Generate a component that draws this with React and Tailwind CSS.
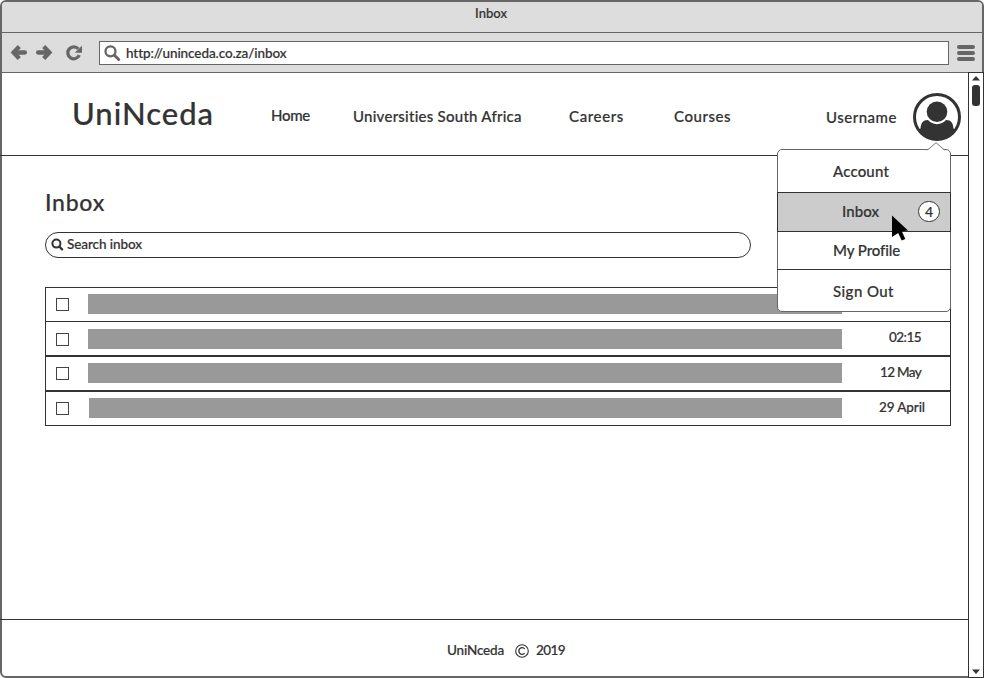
import { useLayoutEffect, useRef, useState } from "react";

// Text run that spreads its letters so that it fills a given width.
function Fit({ width, className = "", children }) {
  const ref = useRef(null);
  const [spacing, setSpacing] = useState(0);
  useLayoutEffect(() => {
    const natural = ref.current.getBoundingClientRect().width;
    setSpacing((width - natural) / String(children).length);
  }, [width, children]);
  return (
    <span
      ref={ref}
      className={"block w-max shrink-0 whitespace-pre " + className}
      style={{ letterSpacing: spacing }}
    >
      {children}
    </span>
  );
}

function TitleBar() {
  return (
    <div className="flex h-[31px] justify-center rounded-t-[4px] border-b border-[#666] bg-[#ddd] pt-[2px]">
      <Fit width={32} className="-mt-px mr-[2px] text-[13px] leading-[20px]">Inbox</Fit>
    </div>
  );
}

function Toolbar() {
  return (
    <div className="flex h-[40px] border-b border-[#666] bg-[#ddd] text-[#666]">
      <svg className="ml-[8px] mt-[11px] h-[18px] w-[18px] shrink-0" viewBox="0 0 18 18" fill="none" stroke="currentColor" strokeWidth="4.3">
        <path d="M9.300 2.500 3.600 8.500l5.700 6" />
        <path d="M4 8.500h10.900" strokeLinecap="round" />
      </svg>
      <svg className="ml-[7px] mt-[11px] h-[18px] w-[18px] shrink-0" viewBox="0 0 18 18" fill="none" stroke="currentColor" strokeWidth="4.3">
        <path d="m8.700 2.500 5.700 6-5.700 6" />
        <path d="M14 8.500H3.100" strokeLinecap="round" />
      </svg>
      <svg className="ml-[12px] mt-[11px] h-[18px] w-[18px] shrink-0" viewBox="0 0 18 18" fill="none">
        <path d="M13.300 4.800A6 6 0 1 0 14.300 11.200" stroke="currentColor" strokeWidth="3.300" />
        <path d="M17 1.700v7.100H9.800z" fill="currentColor" />
      </svg>
      <div className="ml-[16px] mt-[8px] flex h-[24px] w-[850px] shrink-0 border border-[#666] bg-white text-[#333]">
        <svg className="ml-[4px] mt-[3px] h-[17px] w-[17px] shrink-0 text-[#666]" viewBox="0 0 17 17" fill="none" stroke="currentColor">
          <circle cx="6.500" cy="6.300" r="5" strokeWidth="2.300" />
          <path d="m10.500 10.300 4.200 4.200" strokeWidth="3" strokeLinecap="round" />
        </svg>
        <Fit width={160} className="ml-[5px] mt-[1px] text-[13.5px] leading-[20px]">http://uninceda.co.za/inbox</Fit>
      </div>
      <div className="ml-[8px] mt-[12px] flex w-[18px] flex-col gap-[2px]">
        <span className="h-[4px] rounded-full bg-[#666]" />
        <span className="h-[4px] rounded-full bg-[#666]" />
        <span className="h-[4px] rounded-full bg-[#666]" />
      </div>
    </div>
  );
}

function Avatar() {
  return (
    <svg className="h-[48px] w-[48px]" viewBox="0 0 48 48" fill="#333">
      <defs>
        <clipPath id="ring">
          <circle cx="24" cy="24" r="23" />
        </clipPath>
      </defs>
      <circle cx="24" cy="24" r="22.500" fill="#fff" stroke="#333" strokeWidth="3" />
      <circle cx="24" cy="18.800" r="10.300" />
      <path clipPath="url(#ring)" d="M5 48V37L7.500 35.500C8 30 10 27 15 27.100A12 12 0 0 0 33 27.100C38 27 40 30 40.500 35.500L43 37V48z" />
    </svg>
  );
}

function UserMenu() {
  return (
    <div className="absolute right-[17px] top-[76px] z-10 h-[163px] w-[174px] rounded-[5px] border border-[#666] bg-white">
      <svg className="absolute -top-[8px] left-[149px] h-[9px] w-[18px]" viewBox="0 0 18 9">
        <path d="M0.500 9V8L9 .7 17 8v1z" fill="#fff" />
        <path d="M0.500 8 9 .7 17.500 8" fill="none" stroke="#777" />
      </svg>
      <div className="h-[42px] pl-[55px] pt-[11px]">
        <Fit width={56} className="text-[15px] leading-[20px]">Account</Fit>
      </div>
      <div className="-mx-px flex h-[40px] border border-[#333] bg-[#ccc] pl-[64px]">
        <Fit width={37} className="mt-[8px] text-[15px] leading-[20px]">Inbox</Fit>
        <span className="ml-[39px] mt-[8px] flex h-[21px] w-[22px] justify-center rounded-full border border-[#333] bg-white text-[14px] leading-[19px]">4</span>
      </div>
      <div className="-mx-px h-[38px] border-b border-[#333] pl-[56px] pt-[8px]">
        <Fit width={67} className="text-[15px] leading-[20px]">My Profile</Fit>
      </div>
      <div className="pl-[55px] pt-[11px]">
        <Fit width={61} className="text-[15px] leading-[20px]">Sign Out</Fit>
      </div>
      <svg className="absolute left-[113px] top-[65px] h-[29px] w-[19px]" viewBox="0 0 19 29">
        <path d="M1 .5 17 15.500l-6.200.7 3.500 7.800-3.600 1.600-3.500-7.700L1 22z" fill="#000" />
      </svg>
    </div>
  );
}

function Header() {
  return (
    <header className="relative -ml-[2px] flex h-[83px] shrink-0 border-b border-[#333]">
      <Fit width={142} className="ml-[72px] mt-[20px] text-[31px] leading-[40px]">UniNceda</Fit>
      <nav className="flex text-[15px] leading-[20px]">
        <div className="ml-[57px] mt-[32px] w-[82px]"><Fit width={39}>Home</Fit></div>
        <div className="mt-[33px] w-[216px]"><Fit width={169}>Universities South Africa</Fit></div>
        <div className="mt-[33px] w-[105px]"><Fit width={55}>Careers</Fit></div>
        <div className="mt-[33px] w-[152px]"><Fit width={57}>Courses</Fit></div>
      </nav>
      <div className="flex">
        <div className="mt-[34px] w-[87px]"><Fit width={71} className="text-[15px] leading-[20px]">Username</Fit></div>
        <div className="mt-[20px]"><Avatar /></div>
      </div>
      <UserMenu />
    </header>
  );
}

function Row({ className, boxClass, barClass, date, dateWidth, dateClass }) {
  return (
    <div className={"flex h-[35px] border border-[#333] " + className}>
      <span className={"ml-[10px] h-[13px] w-[13px] shrink-0 border border-[#444] " + boxClass} />
      <span className={"h-[20px] shrink-0 bg-[#999] " + barClass} />
      {date && <Fit width={dateWidth} className={"mt-[5px] text-[13.5px] leading-[20px] " + dateClass}>{date}</Fit>}
    </div>
  );
}

function Inbox() {
  return (
    <main className="flex-1 pl-[43px]">
      <Fit width={60} className="mt-[31px] text-[23px] leading-[30px]">Inbox</Fit>
      <div className="mt-[15px] flex h-[26px] w-[706px] rounded-full border border-[#333]">
        <svg className="ml-[5px] mt-[5px] h-[13px] w-[13px] shrink-0" viewBox="0 0 13 13" fill="none" stroke="#333">
          <circle cx="5.400" cy="5.600" r="4" strokeWidth="2" />
          <path d="m8.500 8.700 2.600 2.700" strokeWidth="2.300" strokeLinecap="round" />
        </svg>
        <Fit width={75} className="ml-[3px] mt-[1px] text-[13.5px] leading-[20px]">Search inbox</Fit>
      </div>
      <div className="mt-[29px] w-[906px]">
        <Row className="" boxClass="mt-[10px]" barClass="ml-[19px] w-[754px] mt-[6px]" />
        <Row className="-mt-px" boxClass="mt-[11px]" barClass="ml-[19px] w-[754px] mt-[7px]" date="02:15" dateWidth={32} dateClass="ml-[47px]" />
        <Row className="" boxClass="mt-[10px]" barClass="ml-[19px] w-[754px] mt-[6px]" date="12 May" dateWidth={41} dateClass="ml-[38px]" />
        <Row className="" boxClass="mt-[10px]" barClass="ml-[20px] w-[753px] mt-[6px]" date="29 April" dateWidth={46} dateClass="ml-[37px]" />
      </div>
    </main>
  );
}

function Footer() {
  return (
    <footer className="-ml-[2px] flex h-[57px] shrink-0 border-t border-[#333] pl-[447px] pt-[20px] text-[13.5px] leading-[20px]">
      <Fit width={57}>UniNceda</Fit>
      <svg className="ml-[11px] mt-[4px] h-[14px] w-[14px] shrink-0" viewBox="0 0 14 14" fill="none" stroke="#333">
        <circle cx="7" cy="7" r="6.300" strokeWidth="1.100" />
        <path d="M9.700 4.900A3.300 3.300 0 1 0 9.700 9.100" strokeWidth="1.300" />
      </svg>
      <Fit width={29} className="ml-[7px]">2019</Fit>
    </footer>
  );
}

function Scrollbar() {
  return (
    <div className="-mb-[2px] -mr-[2px] -mt-px flex w-[16px] shrink-0 flex-col items-center border border-[#333] bg-white">
      <svg className="mt-[3px] h-[5px] w-[8px]" viewBox="0 0 8 5"><path d="M0 4.500 4 0l4 4.500z" fill="#333" /></svg>
      <span className="mt-[4px] h-[21px] w-[8px] rounded-[3px] bg-[#333]" />
      <svg className="mb-[3px] mt-auto h-[5px] w-[8px]" viewBox="0 0 8 5"><path d="M0 .5h8L4 5z" fill="#333" /></svg>
    </div>
  );
}

export default function App() {
  return (
    <div className="bg-white">
      <div className="flex h-[678px] w-[984px] flex-col rounded-[6px] border-2 border-[#666] bg-white font-['Lato','Liberation_Sans',sans-serif] font-medium text-[#333] [-webkit-text-stroke:0.2px_#333]">
        <TitleBar />
        <Toolbar />
        <div className="flex min-h-0 flex-1">
          <div className="flex min-w-0 flex-1 flex-col">
            <Header />
            <Inbox />
            <Footer />
          </div>
          <Scrollbar />
        </div>
      </div>
    </div>
  );
}
